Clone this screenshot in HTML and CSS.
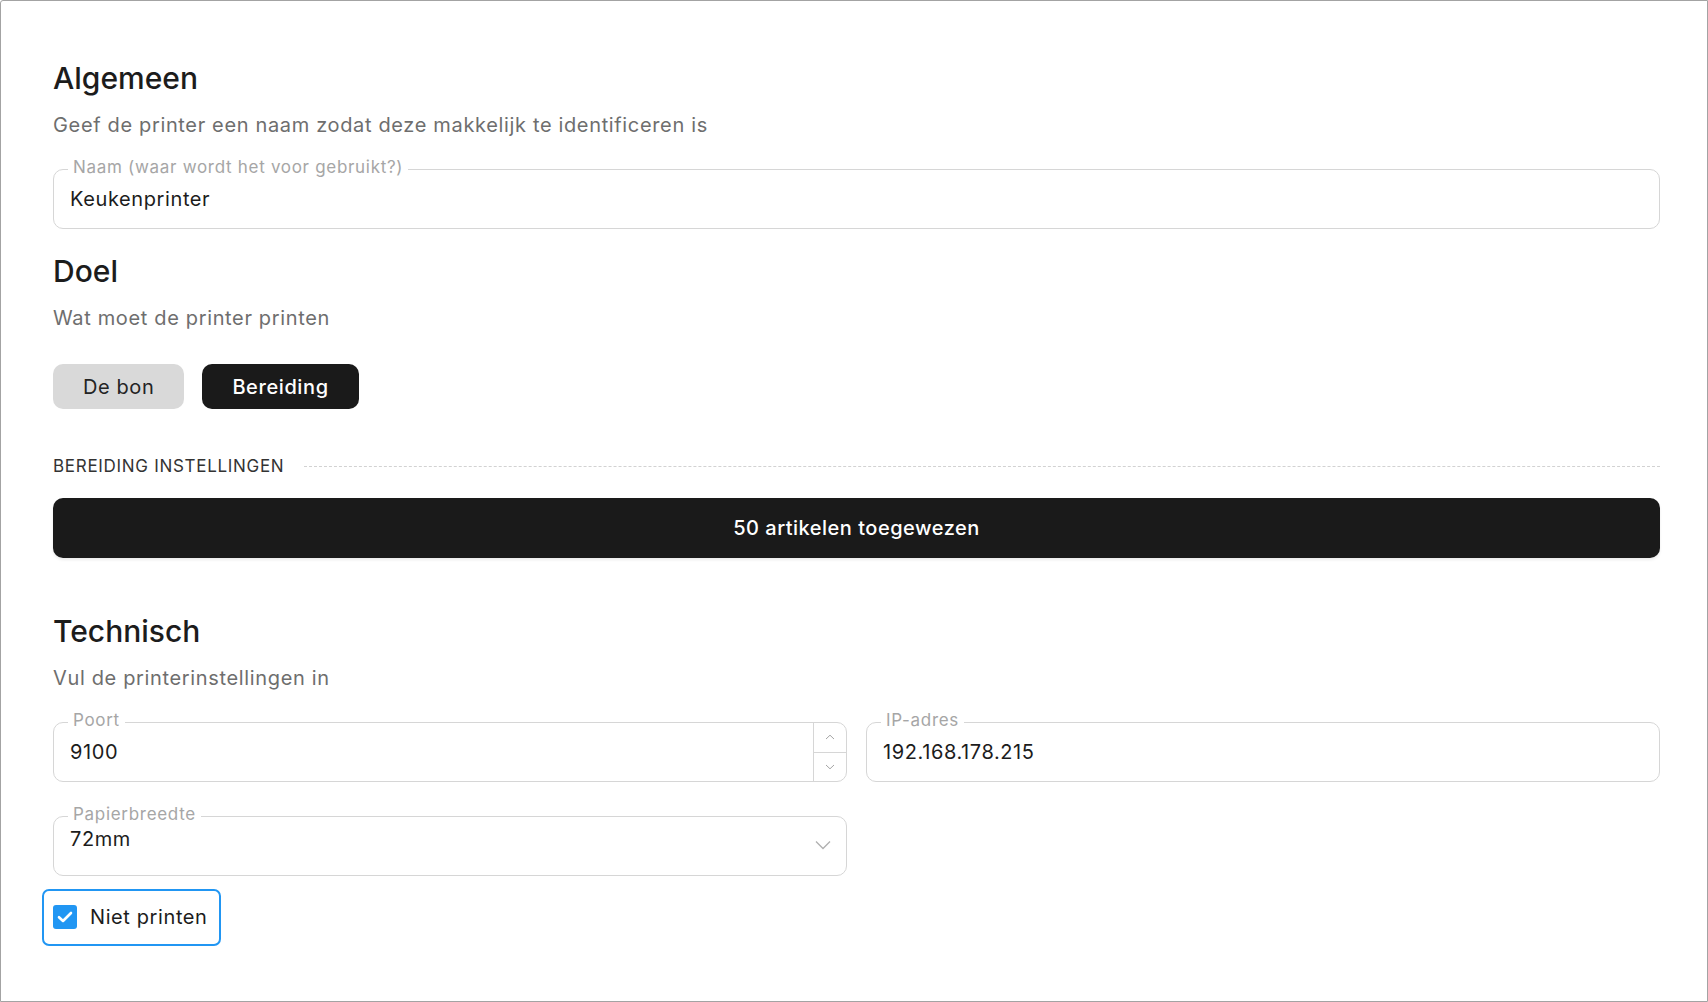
FILE: index.html
```html
<!DOCTYPE html>
<html lang="nl">
<head>
  <meta charset="UTF-8" />
  <meta name="viewport" content="width=device-width, initial-scale=1.0" />
  <title>Printer instellingen</title>
  <link rel="stylesheet" href="styles.css">
</head>
<body>

<div class="window">
  <main class="form">

    <section class="group">
      <h2 class="group-title">Algemeen</h2>
      <p class="group-sub">Geef de printer een naam zodat deze makkelijk te identificeren is</p>
      <div class="field field-first">
        <span class="field-label">Naam (waar wordt het voor gebruikt?)</span>
        <span class="field-value">Keukenprinter</span>
      </div>
    </section>

    <section class="group group-doel">
      <h2 class="group-title">Doel</h2>
      <p class="group-sub">Wat moet de printer printen</p>
      <div class="choices">
        <button class="choice">De bon</button>
        <button class="choice choice-active">Bereiding</button>
      </div>
      <div class="divider">
        <span class="divider-text">BEREIDING INSTELLINGEN</span>
        <span class="divider-line"></span>
      </div>
      <button class="assign-bar">50 artikelen toegewezen</button>
    </section>

    <section class="group group-tech">
      <h2 class="group-title">Technisch</h2>
      <p class="group-sub">Vul de printerinstellingen in</p>
      <div class="field-row field-first">
        <div class="field field-number">
          <span class="field-label">Poort</span>
          <span class="field-value">9100</span>
          <div class="spinner">
            <span class="spin-btn">
              <svg width="10" height="6" viewBox="0 0 10 6"><path d="M1 5 L5 1.2 L9 5" fill="none" stroke="#a5a5a5" stroke-width="1"/></svg>
            </span>
            <span class="spin-btn">
              <svg width="10" height="6" viewBox="0 0 10 6"><path d="M1 1 L5 4.8 L9 1" fill="none" stroke="#a5a5a5" stroke-width="1"/></svg>
            </span>
          </div>
        </div>
        <div class="field">
          <span class="field-label">IP-adres</span>
          <span class="field-value">192.168.178.215</span>
        </div>
      </div>
      <div class="field-row field-next">
        <div class="field field-select">
          <span class="field-label">Papierbreedte</span>
          <span class="field-value">72mm</span>
          <svg class="select-arrow" width="16" height="10" viewBox="0 0 16 10"><path d="M1 1.5 L8 8.5 L15 1.5" fill="none" stroke="#b0b0b0" stroke-width="1.3"/></svg>
        </div>
      </div>
      <label class="check">
        <span class="check-box">
          <svg width="16" height="12" viewBox="0 0 16 12"><path d="M2 6.2 L6 10 L14 2" fill="none" stroke="#fff" stroke-width="2.6" stroke-linecap="round" stroke-linejoin="round"/></svg>
        </span>
        <span class="check-text">Niet printen</span>
      </label>
    </section>

  </main>
</div>

</body>
</html>
```

FILE: styles.css
```css
* { box-sizing: border-box; }
html, body { height: 100%; }
body {
  margin: 0;
  font-family: Inter, 'Noto Sans', sans-serif;
  color: #1c1c1c;
  background: #fff;
}
.window {
  height: 100%;
  border: 1px solid #a3a3a3;
  border-radius: 3px 0 0 0;
  background: #fff;
}
.form {
  padding: 59px 47px 0 52px;
}
.group-title {
  margin: 0;
  font-size: 30px;
  line-height: 36px;
  font-weight: 500;
  color: #1c1c1c;
}
.group-sub {
  margin: 15px 0 0;
  font-size: 20px;
  line-height: 28px;
  letter-spacing: 0.65px;
  color: #6e6e6e;
}
.group-doel { margin-top: 24px; }
.group-tech { margin-top: 55px; }

/* outlined fields */
.field {
  position: relative;
  display: flex;
  align-items: center;
  height: 60px;
  padding: 0 16px;
  border: 1px solid #d6d6d6;
  border-radius: 10px;
}
.field-first { margin-top: 30px; }
.field-next { margin-top: 34px; }
.field-label {
  position: absolute;
  top: -13px;
  left: 14px;
  padding: 0 5px;
  background: #fff;
  font-size: 17px;
  line-height: 20px;
  letter-spacing: 0.7px;
  color: #a6a6a6;
}
.field-value {
  flex: 1;
  font-size: 20px;
  line-height: 24px;
  letter-spacing: 0.6px;
  color: #1c1c1c;
}
.field-row {
  display: grid;
  grid-template-columns: 1fr 1fr;
  gap: 19px;
}
.field-number { padding-right: 0; }
.spinner {
  align-self: stretch;
  width: 33px;
  display: flex;
  flex-direction: column;
  border-left: 1px solid #d6d6d6;
}
.spin-btn {
  flex: 1;
  display: flex;
  align-items: center;
  justify-content: center;
}
.spin-btn + .spin-btn { border-top: 1px solid #d6d6d6; }
.field-select {
  align-items: flex-start;
  padding-top: 10px;
  padding-right: 15px;
}
.select-arrow { align-self: center; margin-top: -12px; }

/* doel */
.choices {
  display: flex;
  gap: 18px;
  margin-top: 32px;
}
.choice {
  height: 45px;
  padding: 0 30px;
  border: none;
  border-radius: 10px;
  background: #d9d9d9;
  font-family: inherit;
  font-size: 20px;
  letter-spacing: 0.6px;
  color: #242424;
  cursor: pointer;
}
.choice-active {
  background: #1a1a1a;
  color: #fff;
  font-weight: 500;
}
.divider {
  display: flex;
  align-items: center;
  margin-top: 47px;
}
.divider-text {
  font-size: 17px;
  line-height: 20px;
  letter-spacing: 0.7px;
  color: #333;
}
.divider-line {
  flex: 1;
  margin-left: 20px;
  border-top: 1px dashed #d2d2d2;
}
.assign-bar {
  display: block;
  width: 100%;
  height: 60px;
  margin-top: 22px;
  border: none;
  border-radius: 10px;
  background: #1a1a1a;
  box-shadow: 0 2px 3px rgba(0,0,0,0.08);
  color: #fff;
  font-family: inherit;
  font-size: 20px;
  font-weight: 500;
  letter-spacing: 0.5px;
  cursor: pointer;
}

/* checkbox */
.check {
  display: inline-flex;
  align-items: center;
  gap: 13px;
  margin: 13px 0 0 -11px;
  padding: 14px 11px 15px 9px;
  border: 2px solid #2196f3;
  border-radius: 7px;
  cursor: pointer;
}
.check-box {
  width: 24px;
  height: 24px;
  border-radius: 3px;
  background: #2196f3;
  display: flex;
  align-items: center;
  justify-content: center;
}
.check-text {
  font-size: 20px;
  line-height: 24px;
  letter-spacing: 0.6px;
  color: #1c1c1c;
}
```
